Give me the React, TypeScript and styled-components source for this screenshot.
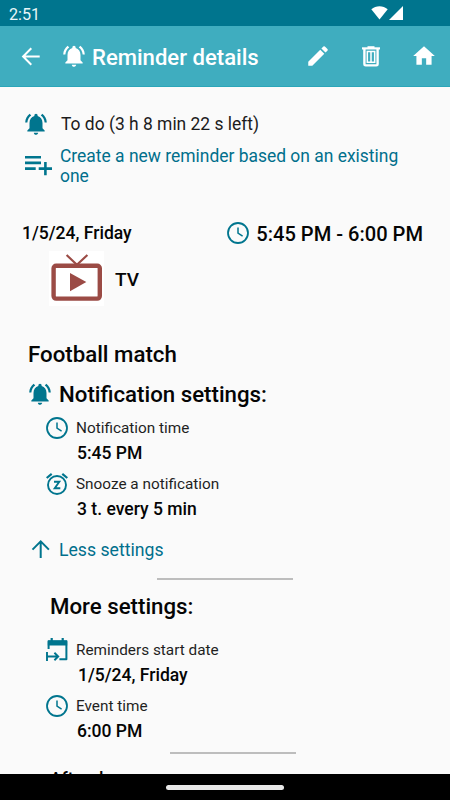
import React from 'react';
import styled, { createGlobalStyle } from 'styled-components';

const accent = '#00758e';

const GlobalStyle = createGlobalStyle`
  * { box-sizing: border-box; }
  html, body { margin: 0; padding: 0; background: #fafafa; }
  svg { display: block; flex: none; }
`;

const Screen = styled.div`
  width: 450px;
  height: 800px;
  display: flex;
  flex-direction: column;
  overflow: hidden;
  background: #fafafa;
  color: #050505;
  font-family: Roboto, sans-serif;
`;

const StatusBar = styled.header`
  height: 26px;
  flex: none;
  display: flex;
  align-items: center;
  justify-content: space-between;
  padding: 2px 47px 0 9px;
  background: ${accent};
  color: #e8f6f8;
  font-size: 16.1px;
`;

const Signals = styled.div`
  display: flex;
  margin-top: -3px;
  gap: 1px;
`;

const AppBar = styled.nav`
  height: 61px;
  flex: none;
  display: flex;
  align-items: center;
  padding: 0 13px 0 18px;
  background: #3fadbf;
  border-bottom: 1px solid #2ba6b9;
  color: #fff;
`;

const AppTitle = styled.h1`
  flex: 1;
  margin: 2px 0 0 5px;
  font-size: 22.1px;
  font-weight: 500;
  line-height: 28px;
  white-space: nowrap;
`;

const BarBell = styled.div`
  margin: 0 0 0 17px;
`;

const Actions = styled.div`
  display: flex;
  align-items: center;
  gap: 27px;
`;

const Content = styled.main`
  flex: 1;
  min-height: 0;
  overflow: hidden;
  display: flex;
  flex-direction: column;
  padding-top: 22px;
`;

const Row = styled.div<{ $h: number; $left: number; $gap?: number; $top?: number }>`
  height: ${(p) => p.$h}px;
  flex: none;
  display: flex;
  align-items: center;
  margin-top: ${(p) => p.$top ?? 0}px;
  padding-left: ${(p) => p.$left}px;
  gap: ${(p) => p.$gap ?? 0}px;
  white-space: nowrap;
`;

const BodyText = styled.span<{ $accent?: boolean; $size?: number }>`
  font-size: ${(p) => p.$size ?? 17.45}px;
  line-height: 20.4px;
  color: ${(p) => (p.$accent ? '#006f8c' : '#1c1c1c')};
`;

const Label = styled.span`
  font-size: 15.34px;
  color: #1f1f1f;
`;

const Value = styled.span`
  font-size: 17.55px;
  font-weight: 500;
`;

const Heading = styled.h2`
  margin: 0;
  font-size: 22.25px;
  font-weight: 500;
`;

const Schedule = styled.div`
  height: 28px;
  flex: none;
  display: flex;
  align-items: center;
  justify-content: space-between;
  margin-top: 32px;
  padding: 0 27px 0 22px;
`;

const TimeRange = styled.div`
  display: flex;
  align-items: center;
  gap: 5px;
  font-size: 20.1px;
  font-weight: 500;
`;

const RangeText = styled.span`
  padding-top: 1px;
`;

const Category = styled.span`
  padding-top: 2px;
  font-size: 19px;
  font-weight: 500;
`;

const Picture = styled.div`
  background: #fff;
`;

const Rule = styled.hr<{ $left: number; $width: number; $top: number }>`
  width: ${(p) => p.$width}px;
  height: 2px;
  flex: none;
  margin: ${(p) => p.$top}px 0 0 ${(p) => p.$left}px;
  border: 0;
  background: #bdbdbd;
`;

const NavBar = styled.footer`
  height: 26px;
  flex: none;
  display: flex;
  align-items: center;
  justify-content: center;
  background: #000;
`;

const Handle = styled.div`
  width: 118px;
  height: 5px;
  border-radius: 3px;
  background: #e8e8e8;
`;

const Bell = ({ color = accent }: { color?: string }) => (
  <svg width="26" height="26" viewBox="0 0 24 24" fill={color}>
    <path d="M7.58 4.08L6.15 2.65C3.75 4.48 2.17 7.3 2.03 10.5h2c.15-2.65 1.51-4.97 3.55-6.42zm12.39 6.42h2c-.15-3.2-1.73-6.02-4.12-7.85l-1.42 1.43c2.02 1.45 3.39 3.77 3.54 6.42zM18 11c0-3.07-1.64-5.64-4.5-6.32V4c0-.83-.67-1.5-1.5-1.5s-1.5.67-1.5 1.5v.68C7.63 5.36 6 7.92 6 11v5l-2 2v1h16v-1l-2-2v-5zm-6 11c.14 0 .27-.01.4-.04.65-.14 1.18-.58 1.44-1.18.1-.24.15-.5.15-.78h-4c.01 1.1.9 2 2.01 2z" />
  </svg>
);

const Clock = () => (
  <svg width="26" height="26" viewBox="0 0 26 26" fill="none" stroke={accent}>
    <circle cx="13" cy="13" r="10" strokeWidth="1.8" />
    <path d="M13 7.5V13.2l4.6 2.9" strokeWidth="1.5" />
  </svg>
);

const Snooze = () => (
  <svg width="26" height="26" viewBox="0 0 26 26" fill="none" stroke={accent}>
    <circle cx="13" cy="14" r="9" strokeWidth="1.9" />
    <path d="M10 10.7h5.3L10.7 17.2h5.6" strokeWidth="1.9" />
    <path d="M2.7 7L7.7 2.9M18.3 2.9L23.3 7" strokeWidth="2.2" />
  </svg>
);

const StartDate = () => (
  <svg width="26" height="26" viewBox="0 0 26 26" fill="none" stroke={accent}>
    <path d="M4.6 12V4.5h17.8v17.7h-7" strokeWidth="2" strokeLinejoin="round" />
    <path d="M3.8 3.3h19.4v5.2H3.8z" fill={accent} stroke="none" />
    <path d="M7.7 1v4M18.7 1v4" strokeWidth="2.2" />
    <path d="M3 15v9M3 19.5h10M10.4 15.8l3.8 3.7-3.8 3.7" strokeWidth="1.9" />
  </svg>
);

const Television = () => (
  <svg width="55" height="55" viewBox="0 0 55 55" fill="none" stroke="#9b4b45">
    <path d="M17.6 4L27.9 13.8 38.4 4" strokeWidth="2.2" />
    <rect x="4.6" y="14.7" width="46.2" height="32.9" rx="2.5" strokeWidth="4.4" />
    <path d="M21 22v18.2l16.3-9.1z" fill="#9b4b45" stroke="none" />
  </svg>
);

const BackArrow = () => (
  <svg width="26" height="26" viewBox="0 0 26 26" fill="none" stroke="#fff" strokeWidth="2">
    <path d="M21.7 13.5H5.5M13.3 5.3L5.1 13.5l8.2 8.2" />
  </svg>
);

const UpArrow = () => (
  <svg width="26" height="26" viewBox="0 0 26 26" fill="none" stroke={accent} strokeWidth="2">
    <path d="M12.7 20.9V4.9M4.5 12.6L12.7 4.4l8.2 8.2" />
  </svg>
);

const Pencil = () => (
  <svg width="26" height="26" viewBox="0 0 24 24" fill="#fff">
    <path d="M3 17.25V21h3.75L17.81 9.94l-3.75-3.75L3 17.25zM20.71 7.04a1 1 0 0 0 0-1.41l-2.34-2.34a1 1 0 0 0-1.41 0l-1.83 1.83 3.75 3.75 1.83-1.83z" />
  </svg>
);

const Trash = () => (
  <svg width="26" height="26" viewBox="0 0 26 26" fill="none" stroke="#fff">
    <path d="M4 5.4h18" strokeWidth="2.2" />
    <path d="M9.5 4.2h7" strokeWidth="2" />
    <path d="M6.4 5.3v15.9q0 1.2 1.2 1.2h10.8q1.2 0 1.2-1.2V5.3" strokeWidth="2.4" />
    <path d="M9.3 8.4h7.4v10.9H9.3zM13 8.4v10.9" strokeWidth="1.5" />
  </svg>
);

const Home = () => (
  <svg width="26" height="26" viewBox="0 0 24 24" fill="#fff">
    <path d="M10 20v-6h4v6h5v-8h3L12 3 2 12h3v8z" />
  </svg>
);

const ListAdd = () => (
  <svg width="30" height="26" viewBox="0 0 30 26" fill="none" stroke={accent} strokeWidth="2.6">
    <path d="M3 4.3h16M3 9.9h16M3 15.6h10.7M16.7 15.6H30M23.4 9v13.2" />
  </svg>
);

const App = () => (
  <Screen>
    <GlobalStyle />
    <StatusBar>
      <span>2:51</span>
      <Signals>
        <svg width="17" height="14" viewBox="0 0 17 14" fill="#fff"><path d="M.3 3.2C5 -.8 12 -.8 16.7 3.2L8.5 13.6z" /></svg>
        <svg width="14" height="14" viewBox="0 0 14 14" fill="#fff"><path d="M14 0v14H0z" /></svg>
      </Signals>
    </StatusBar>
    <AppBar>
      <BackArrow />
      <BarBell><Bell color="#fff" /></BarBell>
      <AppTitle>Reminder details</AppTitle>
      <Actions><Pencil /><Trash /><Home /></Actions>
    </AppBar>
    <Content>
      <Row $h={30} $left={23} $gap={12}><Bell /><BodyText>To do (3 h 8 min 22 s left)</BodyText></Row>
      <Row $h={42} $left={22} $gap={8} $top={6}>
        <ListAdd />
        <BodyText $accent>Create a new reminder based on an existing<br />one</BodyText>
      </Row>
      <Schedule>
        <Value>1/5/24, Friday</Value>
        <TimeRange><Clock /><RangeText>5:45 PM - 6:00 PM</RangeText></TimeRange>
      </Schedule>
      <Row $h={55} $left={49} $gap={11} $top={4}><Picture><Television /></Picture><Category>TV</Category></Row>
      <Row $h={28} $left={28} $top={34}><Heading>Football match</Heading></Row>
      <Row $h={30} $left={27} $gap={6} $top={11}><Bell /><Heading>Notification settings:</Heading></Row>
      <Row $h={26} $left={44} $gap={6} $top={6}><Clock /><Label>Notification time</Label></Row>
      <Row $h={22} $left={77} $top={1}><Value>5:45 PM</Value></Row>
      <Row $h={26} $left={44} $gap={6} $top={7}><Snooze /><Label>Snooze a notification</Label></Row>
      <Row $h={22} $left={77} $top={1}><Value>3 t. every 5 min</Value></Row>
      <Row $h={26} $left={28} $gap={5} $top={17}><UpArrow /><BodyText $accent $size={17.65}>Less settings</BodyText></Row>
      <Rule $left={157} $width={136} $top={15} />
      <Row $h={28} $left={50} $top={12}><Heading>More settings:</Heading></Row>
      <Row $h={26} $left={44} $gap={6} $top={17}><StartDate /><Label>Reminders start date</Label></Row>
      <Row $h={22} $left={78} $top={1}><Value>1/5/24, Friday</Value></Row>
      <Row $h={26} $left={44} $gap={6} $top={7}><Clock /><Label>Event time</Label></Row>
      <Row $h={22} $left={77} $top={1}><Value>6:00 PM</Value></Row>
      <Rule $left={170} $width={126} $top={10} />
      <Row $h={26} $left={50} $top={12}><Value>After d</Value></Row>
    </Content>
    <NavBar><Handle /></NavBar>
  </Screen>
);

export default App;
